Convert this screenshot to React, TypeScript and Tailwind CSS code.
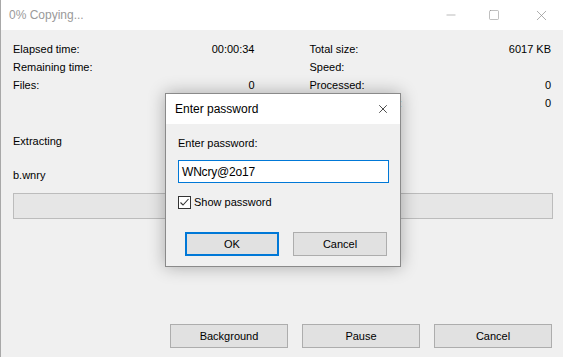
import { Minus, Square, X } from 'lucide-react';

const font = { fontFamily: '"Liberation Sans", Arial, sans-serif' };

function StatRow({ label, value }: { label: string; value: string }) {
  return (
    <div className="flex h-[18px] items-center justify-between">
      <span>{label}</span>
      <span>{value}</span>
    </div>
  );
}

function WinButton({ label }: { label: string }) {
  return (
    <button className="h-[24px] w-[118px] border border-[#adadad] bg-[#e1e1e1] text-[11px] text-black">
      {label}
    </button>
  );
}

export default function App() {
  return (
    <div className="relative h-[357px] w-[563px] overflow-hidden border-l border-[#a8a8a8] bg-[#f0f0f0] text-[11px] text-black" style={font}>
      {/* Title bar */}
      <div className="flex h-[30px] items-center justify-between bg-white">
        <span className="pl-[8px] text-[12px] text-[#9a9a9a]">0% Copying...</span>
        <div className="flex h-full items-center text-[#8c8c8c]">
          <div className="flex w-[46px] justify-center pl-[6px]"><Minus className="h-[14px] w-[14px]" strokeWidth={1} /></div>
          <div className="flex w-[46px] justify-center"><Square className="h-[12px] w-[12px]" strokeWidth={1.1} /></div>
          <div className="flex w-[46px] justify-center pl-[2px]"><X className="h-[17px] w-[17px]" strokeWidth={1} /></div>
        </div>
      </div>

      {/* Body */}
      <div className="flex flex-col px-[12px] pt-[10px]">
        <div className="flex gap-[55px]">
          <div className="flex w-[243px] flex-col">
            <StatRow label="Elapsed time:" value="00:00:34" />
            <StatRow label="Remaining time:" value="" />
            <StatRow label="Files:" value="0" />
            <StatRow label="" value="" />
          </div>
          <div className="flex w-[243px] flex-col">
            <StatRow label="Total size:" value="6017 KB" />
            <StatRow label="Speed:" value="" />
            <StatRow label="Processed:" value="0" />
            <StatRow label="Compression ratio:" value="0" />
          </div>
        </div>
        <div className="mt-[20px] flex h-[18px] items-center">Extracting</div>
        <div className="mt-[16px] flex h-[18px] items-center">b.wnry</div>
        <div className="mt-[9px] h-[26px] w-[540px] border border-[#bcbcbc] bg-[#e6e6e6]" />
        <div className="mr-[-1px] mt-[105px] flex justify-end gap-[14px]">
          <WinButton label="Background" />
          <WinButton label="Pause" />
          <WinButton label="Cancel" />
        </div>
      </div>

      {/* Password dialog */}
      <div className="absolute left-[164px] top-[93px] flex h-[174px] w-[236px] flex-col border border-[#8a8a8a] bg-[#f0f0f0] shadow-[0_0_16px_rgba(0,0,0,0.3)]">
        <div className="flex h-[30px] items-center justify-between bg-white pl-[9px] pr-[10px]">
          <span className="text-[12px]">Enter password</span>
          <X className="h-[14px] w-[14px] text-black" strokeWidth={1.2} />
        </div>
        <div className="flex flex-col px-[12px]">
          <div className="mt-[12px] flex h-[15px] items-center">Enter password:</div>
          <div className="mt-[9px] flex h-[23px] w-[211px] items-center border border-[#0078d7] bg-white pl-[3px] text-[12px] tracking-[-0.2px]">
            WNcry@2o17
          </div>
          <div className="mt-[13px] flex h-[13px] items-center gap-[3px]">
            <div className="flex h-[13px] w-[13px] items-center justify-center border border-[#333] bg-white">
              <svg viewBox="0 0 11 11" className="h-[11px] w-[11px]">
                <path d="M1.5 5.5 L4 8 L9.5 2" fill="none" stroke="#333" strokeWidth="1.1" />
              </svg>
            </div>
            <span>Show password</span>
          </div>
          <div className="mt-[23px] flex gap-[14px] pl-[7px]">
            <button className="h-[24px] w-[94px] border-2 border-[#0078d7] bg-[#e1e1e1] text-[11px]">OK</button>
            <button className="h-[24px] w-[94px] border border-[#adadad] bg-[#e1e1e1] text-[11px]">Cancel</button>
          </div>
        </div>
      </div>
    </div>
  );
}
